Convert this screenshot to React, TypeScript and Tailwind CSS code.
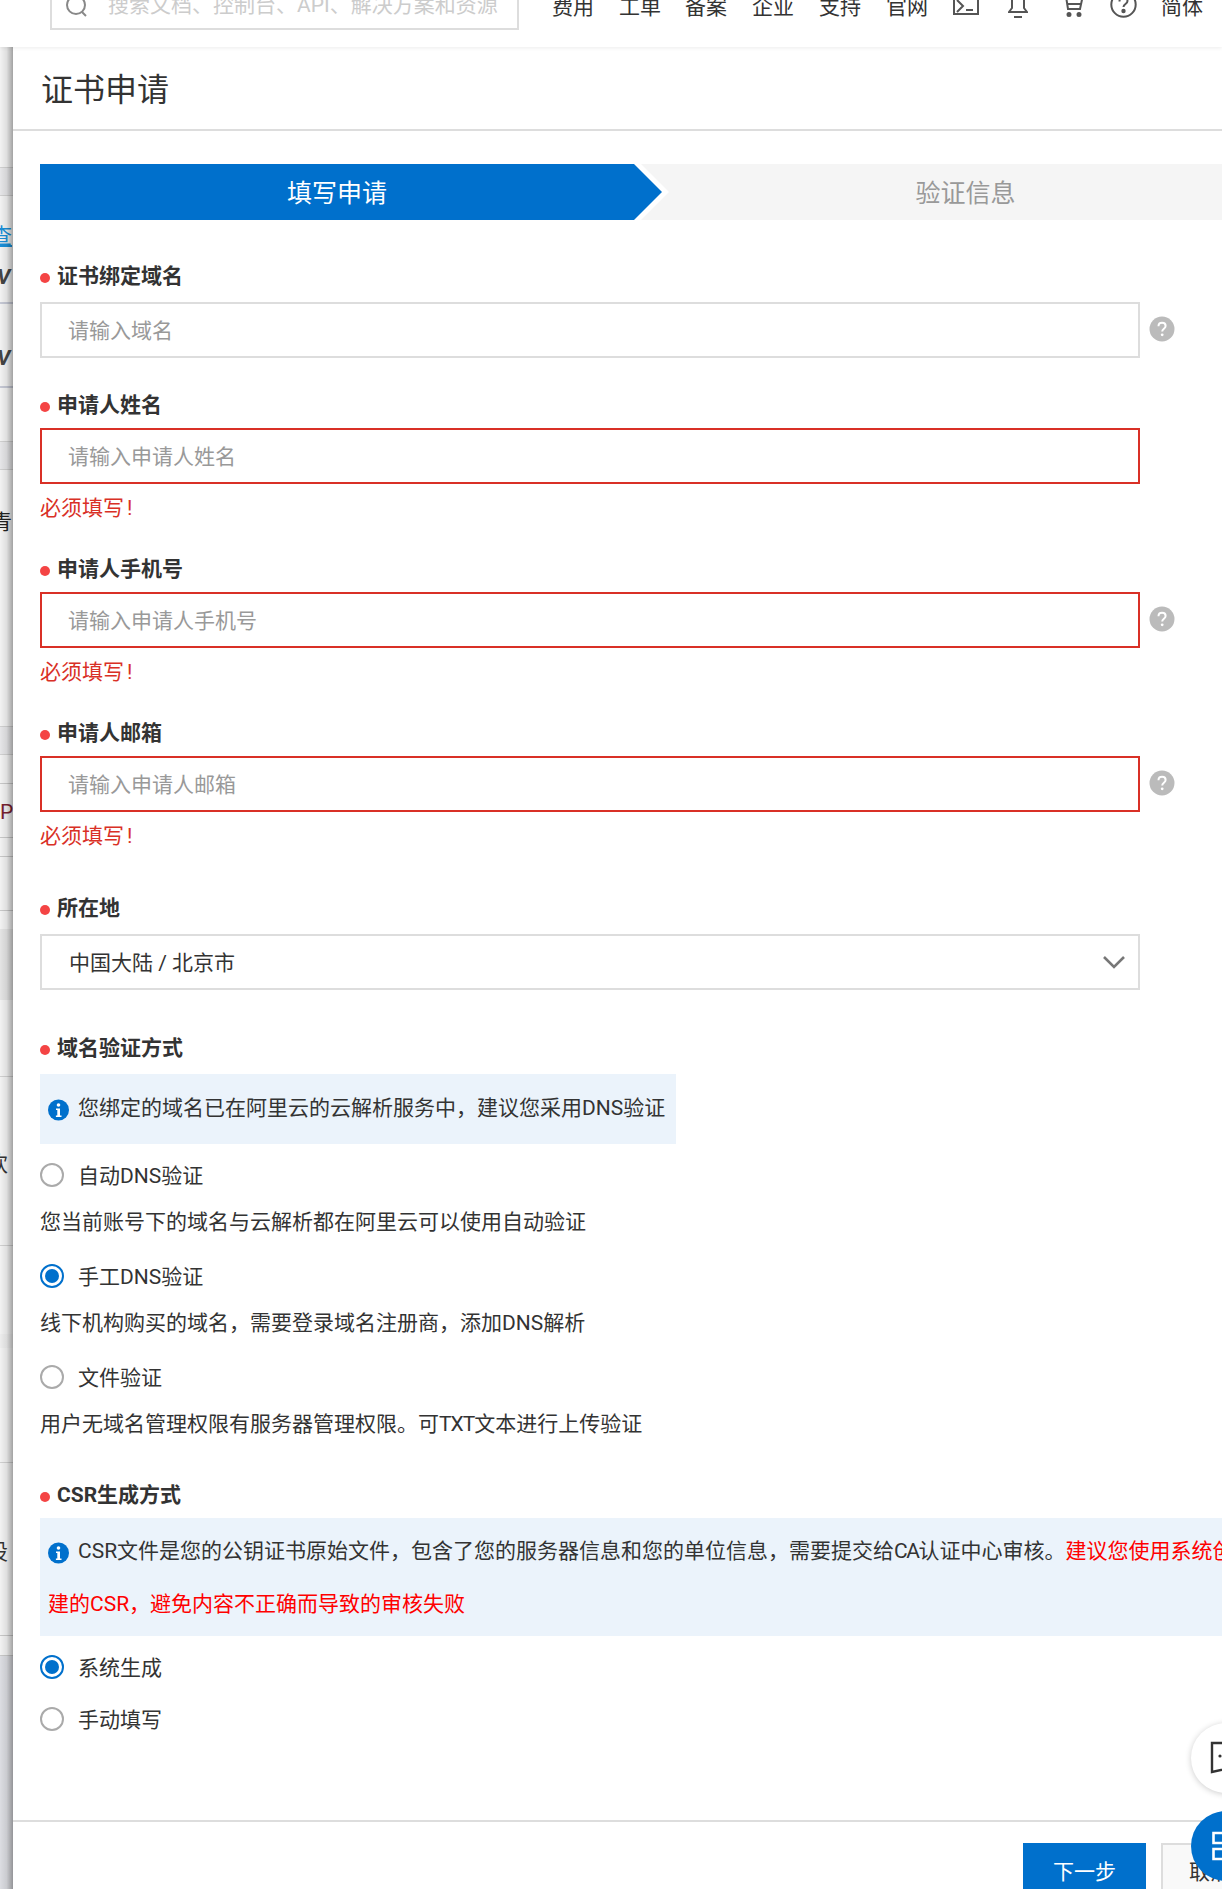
import React from "react";

const FONT = "font-['Roboto','Noto_Sans_CJK_SC',sans-serif]";

function Label({ text, className }: { text: string; className: string }) {
  return (
    <div className={`flex h-6 items-center text-[21px] font-bold leading-6 text-[#333] ${className}`}>
      <span className="mr-[7px] mt-[4px] h-[10px] w-[10px] rounded-full bg-[#f44444]" />
      {text}
    </div>
  );
}

function Help() {
  return (
    <svg width="26" height="26" viewBox="0 0 26 26" className="-mt-[3px] ml-[9px] shrink-0">
      <circle cx="13" cy="13" r="12.5" fill="#bbbbbb" />
      <path d="M9.5 10.2c0-2.2 1.6-3.4 3.6-3.4s3.5 1.2 3.5 3.1c0 2.7-3.4 2.8-3.4 5.5" fill="none" stroke="#fff" strokeWidth="2" />
      <circle cx="13.2" cy="18.8" r="1.4" fill="#fff" />
    </svg>
  );
}

function Field({ placeholder, error, help, className }: { placeholder: string; error?: boolean; help?: boolean; className: string }) {
  return (
    <div className={`flex items-center ${className}`}>
      <input
        readOnly
        placeholder={placeholder}
        className={`h-14 w-[1100px] border-2 bg-white pl-[26px] pt-[2px] text-[21px] outline-none placeholder:text-[#999] ${error ? "border-[#d93026]" : "border-[#dddddd]"}`}
      />
      {help && <Help />}
    </div>
  );
}

function ErrorText({ className }: { className: string }) {
  return (
    <div className={`h-6 pt-[1px] text-[21px] leading-6 text-[#d93026] ${className}`}>
      必须填写<span className="ml-[3px]">!</span>
    </div>
  );
}

function Radio({ text, checked, className }: { text: string; checked?: boolean; className: string }) {
  return (
    <div className={`flex h-6 items-center text-[21px] leading-6 text-[#333] ${className}`}>
      <span className={`mr-[14px] flex h-6 w-6 items-center justify-center rounded-full border-2 ${checked ? "border-[#0070cc]" : "border-[#aaaaaa]"}`}>
        {checked && <span className="h-[14px] w-[14px] rounded-full bg-[#0070cc]" />}
      </span>
      <span className="pt-[2px]">{text}</span>
    </div>
  );
}

function Desc({ children, className }: { children: React.ReactNode; className: string }) {
  return <div className={`h-6 text-[21px] leading-6 text-[#333] ${className}`}>{children}</div>;
}

function InfoIcon() {
  return (
    <svg width="21" height="22" viewBox="0 0 21 22" className="mr-[9px] mt-[2px] inline-block shrink-0">
      <circle cx="10.5" cy="11" r="10.5" fill="#0070cc" />
      <circle cx="10.5" cy="6" r="1.8" fill="#fff" />
      <path d="M8 9.5h4v7h1.5v1.6h-5.6v-1.6h1.4v-5.4H8z" fill="#fff" />
    </svg>
  );
}

function Nav({ text, className }: { text: string; className: string }) {
  return <span className={`text-[21px] leading-6 text-[#333] ${className}`}>{text}</span>;
}

function Strip() {
  return (
    <div className="relative h-full w-[13px] shrink-0 overflow-hidden bg-[#f2f2f2]">
      <div className="flex flex-col">
        <div className="h-[120px]" />
        <div className="h-[29px] border-y border-[#d0d0d0] bg-[#e6e6e8]" />
        <div className="-ml-[9px] mt-[27px] h-[26px] text-[21px] leading-[26px] text-[#1a8fd8] underline">查</div>
        <div className="-ml-[3px] mt-[16px] h-[24px] text-[21px] font-bold italic leading-[24px] text-[#444]">V</div>
        <div className="mt-[13px] h-[2px] bg-[#c5c8d4]" />
        <div className="-ml-[3px] mt-[42px] h-[24px] text-[21px] font-bold italic leading-[24px] text-[#444]">V</div>
        <div className="mt-[16px] h-[2px] bg-[#c5c8d4]" />
        <div className="mt-[53px] h-[29px] border-y border-[#d0d0d0] bg-[#e6e6e8]" />
        <div className="-ml-[9px] mt-[39px] h-[26px] text-[21px] leading-[26px] text-[#222]">青</div>
        <div className="mt-[191px] h-[29px] border-y border-[#d0d0d0] bg-[#e6e6e8]" />
        <div className="mt-[28px] h-px bg-[#c8c8c8]" />
        <div className="mt-[15px] h-[26px] text-[21px] leading-[26px] text-[#7a2030]">P</div>
        <div className="mt-[12px] h-px bg-[#c8c8c8]" />
        <div className="mt-[18px] h-px bg-[#c8c8c8]" />
        <div className="mt-[53px] h-px bg-[#c8c8c8]" />
        <div className="mt-[18px] h-[71px] bg-[#e4e4e4]" />
        <div className="mt-[76px] h-px bg-[#d0d0d0]" />
        <div className="-ml-[13px] mt-[74px] h-[26px] text-[21px] leading-[26px] text-[#333]">欢</div>
        <div className="mt-[68px] h-px bg-[#d0d0d0]" />
        <div className="mt-[88px] h-[14px] bg-[#ededed]" />
        <div className="mt-[114px] h-px bg-[#d0d0d0]" />
        <div className="-ml-[13px] mt-[76px] h-[26px] text-[21px] leading-[26px] text-[#333]">设</div>
        <div className="mt-[70px] h-px bg-[#c8c8c8]" />
        <div className="mt-[19px] h-px bg-[#c8c8c8]" />
        <div className="h-[240px] bg-[#dcdde2]" />
      </div>
      <div className="absolute inset-0 bg-gradient-to-r from-transparent via-[rgba(0,0,0,0.08)] to-[rgba(0,0,0,0.33)]" />
    </div>
  );
}

export default function App() {
  return (
    <div className={`relative flex h-[1889px] w-[1222px] flex-col overflow-hidden bg-white ${FONT}`}>
      <header className="relative z-10 flex h-[47px] shrink-0 items-end overflow-hidden bg-white shadow-[0_1px_4px_rgba(0,0,0,0.08)]">
        <div className="mb-[17px] ml-[50px] flex h-14 w-[469px] shrink-0 items-end border-2 border-[#dddddd] pb-[11px] pl-[13px]">
          <svg width="24" height="40" viewBox="0 0 24 40" fill="none" stroke="#888" strokeWidth="2" className="mb-[-11px] mr-[19px] shrink-0">
            <circle cx="11" cy="17" r="9" />
            <path d="M17 24l4 4" />
          </svg>
          <span className="whitespace-nowrap text-[21px] leading-6 text-[#cccccc]">搜索文档、控制台、API、解决方案和资源</span>
        </div>
        <div className="mb-[28px] flex h-6 items-end">
          <Nav text="费用" className="ml-[33px]" />
          <Nav text="工单" className="ml-[25px]" />
          <Nav text="备案" className="ml-[24px]" />
          <Nav text="企业" className="ml-[25px]" />
          <Nav text="支持" className="ml-[25px]" />
          <Nav text="官网" className="ml-[25px]" />
          <svg width="26" height="26" viewBox="0 0 26 26" fill="none" stroke="#555" strokeWidth="2" className="mb-[4px] ml-[25px] shrink-0">
            <path d="M1 1h24v24H1z" />
            <path d="M4 11l6 6-6 6M13 21h7" />
          </svg>
          <svg width="20" height="28" viewBox="0 0 20 28" fill="none" stroke="#555" strokeWidth="2" className="mb-[1px] ml-[29px] shrink-0">
            <path d="M4 4c0 0 1-3 6-3s6 3 6 3v14l3 4H1l3-4z" />
            <path d="M6 27h8" />
          </svg>
          <svg width="22" height="28" viewBox="0 0 22 28" fill="none" stroke="#555" strokeWidth="2" className="mb-[2px] ml-[34px] shrink-0">
            <path d="M0 1h3l3 19h12l3-14" />
            <path d="M5 15h14" />
            <circle cx="7" cy="25.5" r="1.5" fill="#555" />
            <circle cx="17" cy="25.5" r="1.5" fill="#555" />
          </svg>
          <svg width="27" height="27" viewBox="0 0 27 27" fill="none" stroke="#555" strokeWidth="2" className="mb-[1px] ml-[26px] shrink-0">
            <circle cx="13.5" cy="13.5" r="12.2" />
            <path d="M9.5 10.5c0-2.5 1.8-4 4-4s4 1.5 4 3.5c0 3-4 3-4 6" />
            <circle cx="13.5" cy="20" r="1.2" fill="#555" />
          </svg>
          <Nav text="简体" className="ml-[24px]" />
        </div>
      </header>

      <div className="flex min-h-0 flex-1">
        <Strip />
        <main className="min-w-0 flex-1 overflow-hidden bg-white">
          <div className="flex h-[84px] items-center border-b-2 border-[#dddddd] pl-[28px] pt-[3px] text-[32px] leading-10 text-[#333]">证书申请</div>

          <div className="pl-[27px]">
            <div className="mt-[33px] flex h-14 w-[1500px] text-[25px]">
              <div className="flex w-[594px] items-center justify-center bg-[#0070cc] pt-[3px] text-white">填写申请</div>
              <svg width="35" height="56" viewBox="0 0 35 56" className="shrink-0">
                <path d="M7 0h28v56H7l28-28z" fill="#f5f5f5" />
                <path d="M0 0l28 28L0 56z" fill="#0070cc" />
              </svg>
              <div className="flex h-14 w-[600px] items-center justify-center bg-[#f5f5f5] pr-[7px] pt-[3px] text-[#999]">验证信息</div>
            </div>

            <Label text="证书绑定域名" className="mt-[44px]" />
            <Field placeholder="请输入域名" help className="mt-[14px]" />

            <Label text="申请人姓名" className="mt-[35px]" />
            <Field placeholder="请输入申请人姓名" error className="mt-[11px]" />
            <ErrorText className="mt-[11px]" />

            <Label text="申请人手机号" className="mt-[38px]" />
            <Field placeholder="请输入申请人手机号" error help className="mt-[11px]" />
            <ErrorText className="mt-[11px]" />

            <Label text="申请人邮箱" className="mt-[38px]" />
            <Field placeholder="请输入申请人邮箱" error help className="mt-[11px]" />
            <ErrorText className="mt-[11px]" />

            <Label text="所在地" className="mt-[49px]" />
            <div className="mt-[14px] flex h-14 w-[1100px] items-center justify-between border-2 border-[#dddddd] pl-[27px] pr-[13px] text-[21px] text-[#333]">
              <span className="pt-[3px]">中国大陆 / 北京市</span>
              <svg width="22" height="14" viewBox="0 0 22 14" fill="none" stroke="#777" strokeWidth="2.6">
                <path d="M1 2l10 10L21 2" />
              </svg>
            </div>

            <Label text="域名验证方式" className="mt-[46px]" />
            <div className="mt-[14px] flex h-[70px] w-[636px] items-center whitespace-nowrap bg-[#ebf3fb] pl-[8px] text-[21px] text-[#333]">
              <InfoIcon />
              您绑定的域名已在阿里云的云解析服务中，建议您采用DNS验证
            </div>
            <Radio text="自动DNS验证" className="mt-[19px]" />
            <Desc className="mt-[23px]">您当前账号下的域名与云解析都在阿里云可以使用自动验证</Desc>
            <Radio text="手工DNS验证" checked className="mt-[30px]" />
            <Desc className="mt-[23px]">线下机构购买的域名，需要登录域名注册商，添加DNS解析</Desc>
            <Radio text="文件验证" className="mt-[30px]" />
            <Desc className="mt-[23px]">
              用户无域名管理权限有服务器管理权限。可<span className="tracking-[-1px]">TXT</span>文本进行上传验证
            </Desc>

            <Label text="CSR生成方式" className="mt-[47px]" />
            <div className="mt-[11px] h-[118px] w-[1300px] whitespace-nowrap bg-[#ebf3fb] pl-[8px] pt-[7px] text-[21px] leading-[53px] text-[#333]">
              <div className="flex items-center">
                <InfoIcon />
                <span>
                  CSR文件是您的公钥证书原始文件，包含了您的服务器信息和您的单位信息，需要提交给<span className="tracking-[-1.5px]">CA</span>认证中心审核。
                </span>
                <span className="text-[#ff0000]">建议您使用系统创</span>
              </div>
              <div className="text-[#ff0000]">建的CSR，避免内容不正确而导致的审核失败</div>
            </div>
            <Radio text="系统生成" checked className="mt-[19px]" />
            <Radio text="手动填写" className="mt-[28px]" />
          </div>

          <div className="mt-[89px] flex border-t-2 border-[#dddddd] pl-[1010px] pt-[21px]">
            <div className="flex h-14 w-[123px] shrink-0 items-center justify-center bg-[#0070cc] pt-[3px] text-[21px] text-white">下一步</div>
            <div className="ml-[15px] flex h-14 w-[123px] shrink-0 items-center border-2 border-[#dddddd] bg-[#f9f9f9] pl-[26px] pt-[3px] text-[21px] text-[#333]">取消</div>
          </div>
        </main>
      </div>

      <div className="absolute left-[1191px] top-[1723px] flex h-[70px] w-[70px] items-center rounded-full bg-white pl-[19px] shadow-[0_1px_6px_rgba(0,0,0,0.2)]">
        <svg width="34" height="34" viewBox="0 0 34 34" fill="none" stroke="#333" strokeWidth="2.4" className="shrink-0">
          <path d="M2 2h30v22L2 31z" />
          <circle cx="10" cy="15" r="1.6" fill="#333" stroke="none" />
        </svg>
      </div>
      <div className="absolute left-[1191px] top-[1811px] flex h-[70px] w-[70px] items-center rounded-full bg-[#0070cc] pl-[21px]">
        <svg width="30" height="30" viewBox="0 0 30 30" fill="none" stroke="#fff" strokeWidth="2.6" className="shrink-0">
          <path d="M1.5 2h27v10h-27zM1.5 18h27v10h-27z" />
        </svg>
      </div>
    </div>
  );
}
